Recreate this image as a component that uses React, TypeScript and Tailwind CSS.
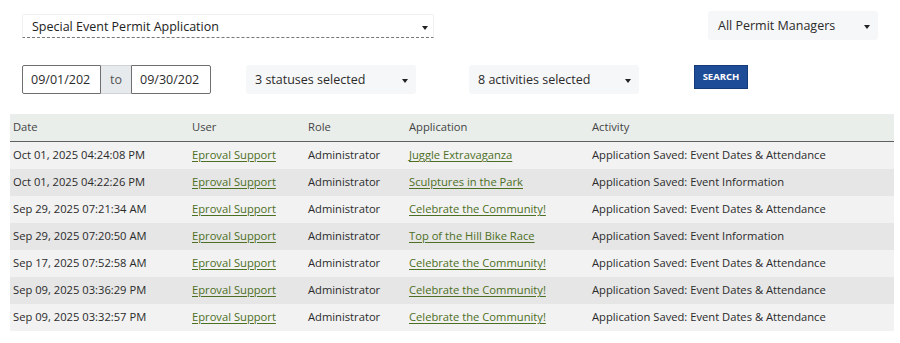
import React from "react";

const rows = [
  { date: "Oct 01, 2025 04:24:08 PM", app: "Juggle Extravaganza", activity: "Application Saved: Event Dates & Attendance" },
  { date: "Oct 01, 2025 04:22:26 PM", app: "Sculptures in the Park", activity: "Application Saved: Event Information" },
  { date: "Sep 29, 2025 07:21:34 AM", app: "Celebrate the Community!", activity: "Application Saved: Event Dates & Attendance" },
  { date: "Sep 29, 2025 07:20:50 AM", app: "Top of the Hill Bike Race", activity: "Application Saved: Event Information" },
  { date: "Sep 17, 2025 07:52:58 AM", app: "Celebrate the Community!", activity: "Application Saved: Event Dates & Attendance" },
  { date: "Sep 09, 2025 03:36:29 PM", app: "Celebrate the Community!", activity: "Application Saved: Event Dates & Attendance" },
  { date: "Sep 09, 2025 03:32:57 PM", app: "Celebrate the Community!", activity: "Application Saved: Event Dates & Attendance" },
];

const Caret = () => (
  <span className="inline-block w-0 h-0 border-l-[3.5px] border-r-[3.5px] border-t-[4px] border-l-transparent border-r-transparent border-t-[#222]" />
);

const Select = ({ label, className }: { label: string; className: string }) => (
  <div
    className={`flex items-center justify-between bg-[#f6f7f8] rounded-[3px] pt-[2px] pl-[9px] pr-[8px] h-[29px] text-[12.5px] text-[#2b2b2b] ${className}`}
  >
    <span>{label}</span>
    <Caret />
  </div>
);

export default function App() {
  return (
    <div className="w-[900px] h-[343px] bg-white font-['Open_Sans',sans-serif] text-[#2b2b2b] relative">
      {/* filters */}
      <div className="flex justify-between pl-[22px] pr-[22px] pt-[11px]">
        <div
          className="mt-[3px] w-[412px] h-[24px] flex items-center justify-between pt-[3px] pl-[9px] pr-[5px] border border-[#f1f1f1] border-b-[#777] text-[12.5px] text-[#222] rounded-t-[2px]"
          style={{ borderBottomStyle: "dashed" }}
        >
          <span>Special Event Permit Application</span>
          <Caret />
        </div>
        <Select label="All Permit Managers" className="w-[170px] pl-[10px]" />
      </div>

      <div className="flex items-start pl-[22px] mt-[25px]">
        <div className="flex h-[29px] text-[12.5px]">
          <div className="w-[79px] border border-[#6f6f6f] rounded-l-[2px] flex items-center pt-[1px] pl-[8px] text-[#2b2b2b]">
            09/01/202
          </div>
          <div className="w-[30px] bg-[#e7eaed] border-y border-[#cfd3d6] flex items-center justify-center pt-[1px] text-[#555]">
            to
          </div>
          <div className="w-[80px] border border-[#6f6f6f] rounded-r-[2px] flex items-center pt-[1px] pl-[8px] text-[#2b2b2b]">
            09/30/202
          </div>
        </div>
        <Select label="3 statuses selected" className="w-[170px] ml-[35px]" />
        <Select label="8 activities selected" className="w-[170px] ml-[53px]" />
        <button className="ml-[55px] w-[54px] h-[24px] bg-[#1f4c96] border border-[#153a78] text-white text-[9.5px] font-bold flex items-center justify-center">
          SEARCH
        </button>
      </div>

      {/* table */}
      <div className="mx-[10px] mt-[20px] w-[884px] text-[11.2px]">
        <div className="flex h-[28px] items-center bg-[#e9eeeb] border-b-[1.5px] border-[#5f5f5f] text-[#444]">
          <div className="w-[182px] pl-[3px]">Date</div>
          <div className="w-[116px]">User</div>
          <div className="w-[101px]">Role</div>
          <div className="w-[183px]">Application</div>
          <div>Activity</div>
        </div>
        {rows.map((r, i) => (
          <div
            key={i}
            className={`flex h-[27px] items-center ${i % 2 === 0 ? "bg-[#f2f2f2]" : "bg-[#e6e6e6]"}`}
          >
            <div className="w-[182px] pl-[3px]">{r.date}</div>
            <div className="w-[116px]">
              <a className="text-[#4d6f24] underline underline-offset-2">Eproval Support</a>
            </div>
            <div className="w-[101px]">Administrator</div>
            <div className="w-[183px]">
              <a className="text-[#4d6f24] underline underline-offset-2">{r.app}</a>
            </div>
            <div>{r.activity}</div>
          </div>
        ))}
      </div>
    </div>
  );
}
